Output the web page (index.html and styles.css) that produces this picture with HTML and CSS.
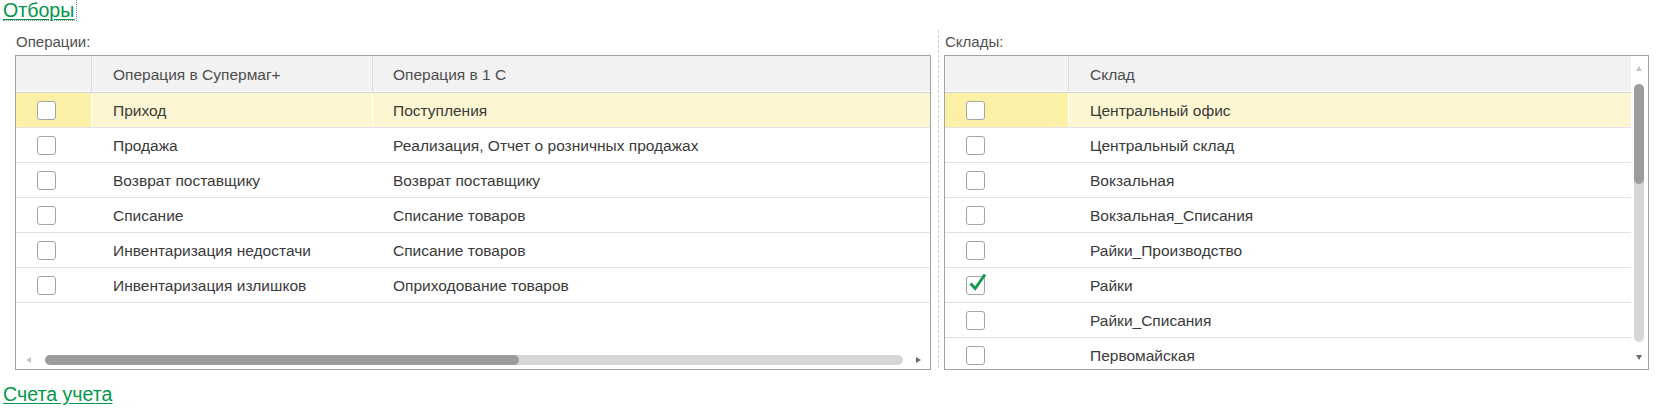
FILE: index.html
```html
<!DOCTYPE html>
<html lang="ru">
<head>
<meta charset="utf-8">
<title>Отборы</title>
<link rel="stylesheet" href="styles.css">
</head>
<body>
<div class="page">
  <a class="group-link focused" href="#">Отборы</a>

  <div class="filters">
    <section class="panel panel-left">
      <div class="label">Операции:</div>
      <div class="grid">
        <div class="grid-main">
          <div class="row head cols-ops">
            <div class="cell cell-check"></div>
            <div class="cell">Операция в Супермаг+</div>
            <div class="cell">Операция в 1 С</div>
          </div>
          <div class="rows">
            <div class="row cols-ops current">
              <div class="cell cell-check"><span class="checkbox"></span></div>
              <div class="cell">Приход</div>
              <div class="cell">Поступления</div>
            </div>
            <div class="row cols-ops">
              <div class="cell cell-check"><span class="checkbox"></span></div>
              <div class="cell">Продажа</div>
              <div class="cell">Реализация, Отчет о розничных продажах</div>
            </div>
            <div class="row cols-ops">
              <div class="cell cell-check"><span class="checkbox"></span></div>
              <div class="cell">Возврат поставщику</div>
              <div class="cell">Возврат поставщику</div>
            </div>
            <div class="row cols-ops">
              <div class="cell cell-check"><span class="checkbox"></span></div>
              <div class="cell">Списание</div>
              <div class="cell">Списание товаров</div>
            </div>
            <div class="row cols-ops">
              <div class="cell cell-check"><span class="checkbox"></span></div>
              <div class="cell">Инвентаризация недостачи</div>
              <div class="cell">Списание товаров</div>
            </div>
            <div class="row cols-ops">
              <div class="cell cell-check"><span class="checkbox"></span></div>
              <div class="cell">Инвентаризация излишков</div>
              <div class="cell">Оприходование товаров</div>
            </div>
          </div>
          <div class="hscroll">
            <div class="arrow"><span class="tri tri-left"></span></div>
            <div class="htrack"><div class="hthumb" style="width:474px"></div></div>
            <div class="arrow"><span class="tri tri-right"></span></div>
          </div>
        </div>
      </div>
    </section>

    <div class="splitter"></div>

    <section class="panel panel-right">
      <div class="label">Склады:</div>
      <div class="grid grid-split">
        <div class="grid-main">
          <div class="row head cols-stores">
            <div class="cell cell-check"></div>
            <div class="cell">Склад</div>
          </div>
          <div class="rows">
            <div class="row cols-stores current">
              <div class="cell cell-check"><span class="checkbox"></span></div>
              <div class="cell">Центральный офис</div>
            </div>
            <div class="row cols-stores">
              <div class="cell cell-check"><span class="checkbox"></span></div>
              <div class="cell">Центральный склад</div>
            </div>
            <div class="row cols-stores">
              <div class="cell cell-check"><span class="checkbox"></span></div>
              <div class="cell">Вокзальная</div>
            </div>
            <div class="row cols-stores">
              <div class="cell cell-check"><span class="checkbox"></span></div>
              <div class="cell">Вокзальная_Списания</div>
            </div>
            <div class="row cols-stores">
              <div class="cell cell-check"><span class="checkbox"></span></div>
              <div class="cell">Райки_Производство</div>
            </div>
            <div class="row cols-stores">
              <div class="cell cell-check"><span class="checkbox checked"><svg class="check" width="22" height="22" viewBox="0 0 22 22"><path d="M2.5 10.5 L7.2 15.5 L17 1.5" fill="none" stroke="#16994a" stroke-width="3" stroke-linecap="butt" stroke-linejoin="miter"/></svg></span></div>
              <div class="cell">Райки</div>
            </div>
            <div class="row cols-stores">
              <div class="cell cell-check"><span class="checkbox"></span></div>
              <div class="cell">Райки_Списания</div>
            </div>
            <div class="row cols-stores">
              <div class="cell cell-check"><span class="checkbox"></span></div>
              <div class="cell">Первомайская</div>
            </div>
          </div>
        </div>
        <div class="vscroll">
          <div class="varrow"><span class="tri tri-up"></span></div>
          <div class="vtrack"><div class="vthumb" style="height:100px"></div></div>
          <div class="varrow"><span class="tri tri-down"></span></div>
        </div>
      </div>
    </section>
  </div>

  <a class="group-link bottom-link" href="#">Счета учета</a>
</div>
</body>
</html>
```

FILE: styles.css
```css
* { box-sizing: border-box; }

html, body {
  margin: 0;
  padding: 0;
  background: #ffffff;
}

body {
  font-family: "Liberation Sans", Arial, sans-serif;
  color: #3a3a3a;
  width: 1655px;
  height: 408px;
  overflow: hidden;
}

.page {
  display: flex;
  flex-direction: column;
  align-items: flex-start;
}

.group-link {
  display: inline-block;
  margin-left: 3px;
  font-size: 19.6px;
  line-height: 21px;
  color: #00984a;
  text-decoration: underline;
  text-underline-offset: 2px;
}

.focused {
  height: 21px;
  padding-right: 2px;
  border-right: 1px dotted #8a8a8a;
  border-bottom: 1px dotted #8a8a8a;
}

.filters {
  display: flex;
  margin: 9px 0 0 15px;
  height: 340px;
}

.panel {
  display: flex;
  flex-direction: column;
}

.panel-left { width: 916px; }
.panel-right { width: 705px; }

.label {
  font-size: 15px;
  line-height: 17px;
  color: #4f4f4f;
  margin: 3px 0 5px 1px;
}

.splitter {
  width: 1px;
  margin: 0 5px 0 7px;
  background: repeating-linear-gradient(to bottom, #cfcfcf 0 3px, transparent 3px 5px);
}

.grid {
  height: 315px;
  border: 1px solid #a3a3a3;
  display: flex;
  overflow: hidden;
}

.grid-main {
  flex: 1;
  display: flex;
  flex-direction: column;
  min-width: 0;
}

.row {
  display: grid;
  height: 35px;
  border-bottom: 1px solid #e3e3e3;
  font-size: 15.5px;
  color: #3a3a3a;
}

.cols-ops { grid-template-columns: 76px 281px 1fr; }
.cols-stores { grid-template-columns: 124px 1fr; }

.row.head {
  height: 37px;
  flex: none;
  background: #f2f2f2;
  border-bottom: 1px solid #d4d4d4;
  box-shadow: inset 0 -1px 0 #ffffff;
  color: #4d4d4d;
}

.row.head .cell {
  border-right: 1px solid #dadada;
}
.row.head .cell:last-child { border-right: none; }

.cell {
  display: flex;
  align-items: center;
  padding-left: 21px;
  padding-top: 1px;
  white-space: nowrap;
  overflow: hidden;
  border-right: 1px solid transparent;
}
.cell:last-child { border-right: none; }

.cell.cell-check { padding-top: 0; }

.cols-ops .cell:nth-child(3) { padding-left: 20px; }

.row.current .cell {
  background: #fcf6d2;
  border-right-color: #ffffff;
}
.row.current .cell.cell-check { background: #fcf0a6; }

.rows {
  flex: 1;
  overflow: hidden;
}

.checkbox {
  position: relative;
  display: block;
  width: 19px;
  height: 19px;
  border: 1px solid #a4a4a4;
  border-radius: 3px;
  background: #ffffff;
}

.check {
  position: absolute;
  left: 1px;
  top: -4px;
  overflow: visible;
}

.hscroll {
  display: flex;
  align-items: center;
  height: 17px;
  margin-bottom: 1px;
  flex: none;
}

.arrow {
  width: 24px;
  display: flex;
  justify-content: center;
  align-items: center;
}

.htrack {
  flex: 1;
  height: 10px;
  margin: 0 3px 0 5px;
  border-radius: 5px;
  background: #d6d6d6;
}

.hthumb {
  height: 10px;
  border-radius: 5px;
  background: #9c9c9c;
}

.vscroll {
  width: 17px;
  flex: none;
  display: flex;
  flex-direction: column;
}

.varrow {
  height: 24px;
  display: flex;
  justify-content: center;
  align-items: center;
  padding-right: 1px;
}

.vtrack {
  flex: 1;
  width: 10px;
  margin: 4px 0 3px 3px;
  border-radius: 5px;
  background: #d6d6d6;
}

.vthumb {
  width: 10px;
  border-radius: 5px;
  background: #9c9c9c;
}

.tri {
  display: block;
  width: 0;
  height: 0;
}

.tri-left {
  border-top: 3px solid transparent;
  border-bottom: 3px solid transparent;
  border-right: 5px solid #c4c4c4;
}

.tri-right {
  border-top: 3px solid transparent;
  border-bottom: 3px solid transparent;
  border-left: 5px solid #6c6c6c;
}

.tri-up {
  border-left: 3px solid transparent;
  border-right: 3px solid transparent;
  border-bottom: 5px solid #c4c4c4;
}

.tri-down {
  border-left: 3px solid transparent;
  border-right: 3px solid transparent;
  border-top: 5px solid #6c6c6c;
}

.bottom-link {
  margin-top: 14px;
}
```
